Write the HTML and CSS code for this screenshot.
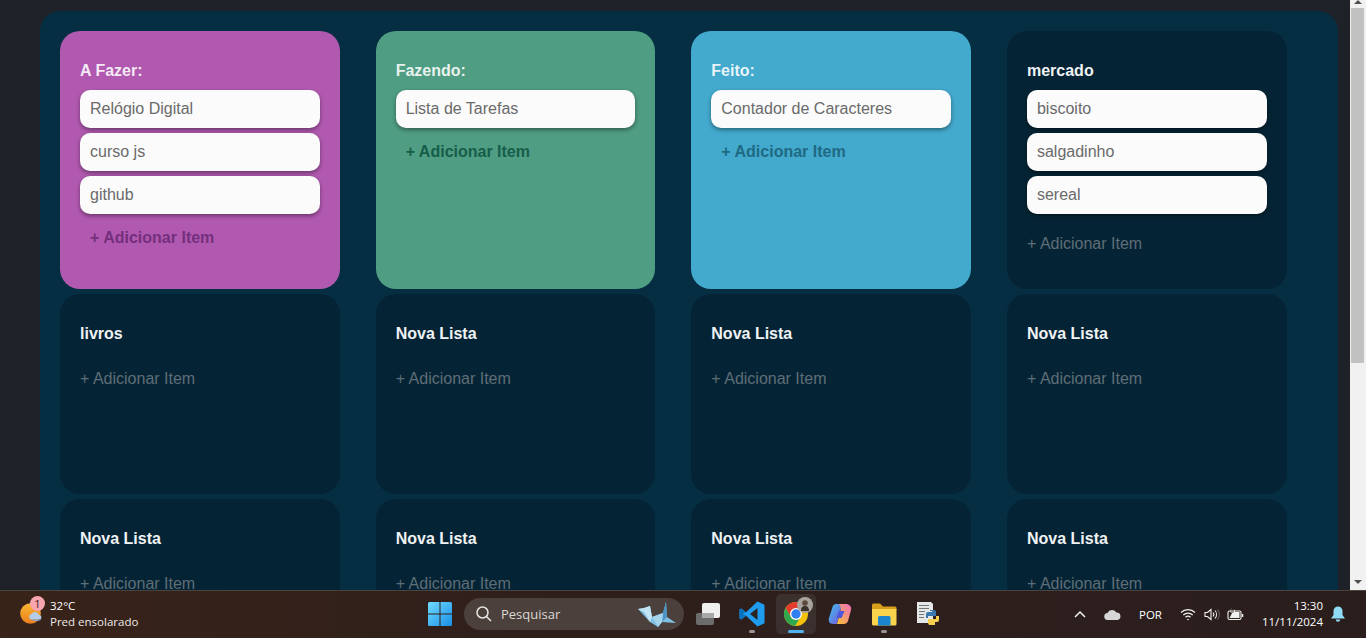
FILE: index.html
```html
<!DOCTYPE html>
<html lang="pt-BR">
<head>
<meta charset="utf-8">
<title>Listas</title>
<link rel="stylesheet" href="styles.css">
</head>
<body>
<div class="screen">
  <div class="window">
    <main class="page">
      <div class="board">
        <section class="card card-purple">
          <h2 class="card-title">A Fazer:</h2>
          <div class="item">Relógio Digital</div>
          <div class="item">curso js</div>
          <div class="item">github</div>
          <div class="add add-strong">+ Adicionar Item</div>
        </section>
        <section class="card card-green">
          <h2 class="card-title">Fazendo:</h2>
          <div class="item">Lista de Tarefas</div>
          <div class="add add-strong">+ Adicionar Item</div>
        </section>
        <section class="card card-blue">
          <h2 class="card-title">Feito:</h2>
          <div class="item">Contador de Caracteres</div>
          <div class="add add-strong">+ Adicionar Item</div>
        </section>
        <section class="card">
          <h2 class="card-title">mercado</h2>
          <div class="item">biscoito</div>
          <div class="item">salgadinho</div>
          <div class="item">sereal</div>
          <div class="add">+ Adicionar Item</div>
        </section>
        <section class="card"><h2 class="card-title">livros</h2><div class="add">+ Adicionar Item</div></section>
        <section class="card"><h2 class="card-title">Nova Lista</h2><div class="add">+ Adicionar Item</div></section>
        <section class="card"><h2 class="card-title">Nova Lista</h2><div class="add">+ Adicionar Item</div></section>
        <section class="card"><h2 class="card-title">Nova Lista</h2><div class="add">+ Adicionar Item</div></section>
        <section class="card"><h2 class="card-title">Nova Lista</h2><div class="add">+ Adicionar Item</div></section>
        <section class="card"><h2 class="card-title">Nova Lista</h2><div class="add">+ Adicionar Item</div></section>
        <section class="card"><h2 class="card-title">Nova Lista</h2><div class="add">+ Adicionar Item</div></section>
        <section class="card"><h2 class="card-title">Nova Lista</h2><div class="add">+ Adicionar Item</div></section>
      </div>
    </main>
    <div class="scrollbar">
      <div class="arrow-up"></div>
      <div class="thumb"></div>
      <div class="arrow-down"></div>
    </div>
  </div>

  <footer class="taskbar">
    <div class="weather">
      <div class="weather-icon">
        <svg width="26" height="26" viewBox="0 0 26 26">
          <defs><linearGradient id="sun" x1="0" y1="0" x2="0" y2="1"><stop offset="0" stop-color="#f7b733"/><stop offset="1" stop-color="#ec7f1e"/></linearGradient></defs>
          <circle cx="11.500" cy="12.500" r="10.300" fill="url(#sun)"/>
          <path d="M12 18.500a2.800 2.800 0 0 1 .6-5.400 4 4 0 0 1 7.400 .8 2.400 2.400 0 0 1 1 4.600z" fill="#b5cdea"/>
          <path d="M11 18.500H23a7 3 0 0 1-12 0Z" fill="#7fa2d4"/>
        </svg>
        <span class="weather-badge">1</span>
      </div>
      <div class="weather-text">
        <div class="weather-temp">32°C</div>
        <div class="weather-desc">Pred ensolarado</div>
      </div>
    </div>

    <div class="apps">
      <svg class="start" width="24" height="24" viewBox="0 0 24 24">
        <defs><linearGradient id="win" x1="0" y1="0" x2="1" y2="1"><stop offset="0" stop-color="#6fdcff"/><stop offset="1" stop-color="#1a8fe6"/></linearGradient></defs>
        <path d="M1.500 0H11.500V11.500H0V1.500A1.500 1.500 0 0 1 1.500 0Z M12.500 0H22.500A1.500 1.500 0 0 1 24 1.500V11.500H12.500Z M0 12.500H11.500V24H1.500A1.500 1.500 0 0 1 0 22.500Z M12.500 12.500H24V22.500A1.500 1.500 0 0 1 22.500 24H12.500Z" fill="url(#win)"/>
      </svg>
      <div class="search">
        <svg width="18" height="18" viewBox="0 0 18 18" fill="none" stroke="#e8e6e4" stroke-width="1.500"><circle cx="7.500" cy="7.500" r="5.500"/><path d="M11.500 11.500L16 16"/></svg>
        <span class="search-text">Pesquisar</span>
        <svg class="crane" width="40" height="28" viewBox="0 0 40 28">
          <path d="M1 9L7 8L13 6L15 17L26 13L29 2L30 17L39 23L25 22L21 27L13 22Z" fill="#7fbfe3"/>
          <path d="M1 9L7 8L13 6L15 17L13 22L7 12Z" fill="#c2e4f4"/>
          <path d="M29 2L30 17L25 22L26 13Z" fill="#4c93c4"/>
          <path d="M15 17L26 13L25 22L21 27Z" fill="#a5d3ec"/>
        </svg>
      </div>
      <div class="app">
        <svg width="26" height="24" viewBox="0 0 26 24">
          <rect x="1" y="11" width="18" height="12" rx="2" fill="#6c6c6c"/>
          <rect x="7" y="1" width="18" height="15" rx="2" fill="#efefef"/>
          <path d="M7 11H19V16H7Z" fill="#a8a8a8"/>
        </svg>
      </div>
      <div class="app app-open">
        <svg width="26" height="26" viewBox="0 0 26 26">
          <path d="M18.500 0.500L25.500 3.800V22.200L18.500 25.500L7 14.800L2.300 18.500L0.500 17.500V8.500L2.300 7.500L7 11.200Z" fill="#1f9cf0"/>
          <path d="M18.500 7L11 13L18.500 19Z" fill="#2c2320"/>
          <path d="M2.300 7.500L0.500 8.500V17.500L2.300 18.500L7 14.800L3.500 13L7 11.200Z" fill="#0a72bd"/>
        </svg>
        <span class="dot"></span>
      </div>
      <div class="app app-active">
        <svg width="26" height="26" viewBox="0 0 26 26">
          <circle cx="13" cy="13" r="12" fill="#f4c20d"/>
          <path d="M13 1A12 12 0 0 0 2.600 7L7.800 16L13 8H23.400A12 12 0 0 0 13 1Z" fill="#e33b2e"/>
          <path d="M2.600 7A12 12 0 0 0 12 25L17.500 16H8Z" fill="#2fa84f"/>
          <circle cx="13" cy="13" r="6" fill="#fff"/>
          <circle cx="13" cy="13" r="4.700" fill="#2f7ff0"/>
        </svg>
        <svg class="avatar" width="16" height="16" viewBox="0 0 16 16">
          <circle cx="8" cy="8" r="8" fill="#a8a39d"/>
          <path d="M4 14C4 10 6 9 8 9S12 10 12 14Z" fill="#3a3128"/>
          <circle cx="8" cy="6" r="2.800" fill="#5b4a3c"/>
        </svg>
        <span class="bar"></span>
      </div>
      <div class="app">
        <svg width="26" height="26" viewBox="0 0 26 26">
          <defs>
            <linearGradient id="cp1" x1="0" y1="0" x2="1" y2="1"><stop offset="0" stop-color="#3cc4ea"/><stop offset="1" stop-color="#7a52e0"/></linearGradient>
            <linearGradient id="cp2" x1="1" y1="0" x2="0" y2="1"><stop offset="0" stop-color="#f06ac0"/><stop offset="1" stop-color="#f7c331"/></linearGradient>
          </defs>
          <path d="M9 3H15L10 23H6C2.500 23 1 20 2 17L5.500 6C6 4 7.500 3 9 3Z" fill="url(#cp1)"/>
          <path d="M12 3H19C22 3 25 5.500 24 9L21 20C20.500 22 18.500 23 17 23H10L13 12C13.500 9 15 7 12 3Z" fill="url(#cp2)"/>
          <path d="M12 10H17.500L14.500 17H9.500Z" fill="#4f55dc"/>
        </svg>
      </div>
      <div class="app app-folder">
        <svg width="26" height="24" viewBox="0 0 26 24">
          <path d="M1 3A1.500 1.500 0 0 1 2.500 1.500H9L12 4.500H24A1.500 1.500 0 0 1 25.500 6V8H1Z" fill="#d99e1c"/>
          <path d="M1 7H25.500V22A1.500 1.500 0 0 1 24 23.500H2.500A1.500 1.500 0 0 1 1 22Z" fill="#f9d34c"/>
          <path d="M7 15.500A1.500 1.500 0 0 1 8.500 14H18A1.500 1.500 0 0 1 19.500 15.500V23.500H7Z" fill="#1b86cf"/>
        </svg>
        <span class="dot"></span>
      </div>
      <div class="app">
        <svg width="26" height="26" viewBox="0 0 26 26">
          <path d="M2 1H16L18 3V22H2Z" fill="#e4e6e8"/>
          <path d="M4 4.500H14M4 7.500H14M4 10.500H10M4 13.500H9M4 16.500H9" stroke="#777" stroke-width="1"/>
          <path d="M15 9H19A2 2 0 0 1 21 11V15H13V17H11V13A2 2 0 0 1 13 11H17V10H15Z" fill="#3a78b0"/>
          <path d="M21 15H24V19A2 2 0 0 1 22 21H20V24H15A2 2 0 0 1 13 22V18H21Z" fill="#f6d04d"/>
        </svg>
      </div>
    </div>

    <div class="tray">
      <svg class="tray-chevron" width="12" height="8" viewBox="0 0 12 8" fill="none" stroke="#f1f1f1" stroke-width="1.500"><path d="M1 7L6 2L11 7"/></svg>
      <svg class="tray-cloud" width="17" height="11" viewBox="0 0 17 11"><path d="M4 11A3.500 3.500 0 0 1 3.500 4 5 5 0 0 1 12.500 3.500 3.800 3.800 0 0 1 13.500 11Z" fill="#d6d6d6"/></svg>
      <span class="tray-lang">POR</span>
      <svg class="tray-wifi" width="16" height="13" viewBox="0 0 16 13" fill="none" stroke="#f1f1f1" stroke-width="1.200"><path d="M1 4.500A10 10 0 0 1 15 4.500M3.300 7A7 7 0 0 1 12.700 7M5.500 9.300A3.600 3.600 0 0 1 10.500 9.300"/><circle cx="8" cy="11.500" r="0.800" fill="#f1f1f1" stroke="none"/></svg>
      <svg class="tray-sound" width="16" height="13" viewBox="0 0 16 13" fill="none" stroke="#f1f1f1" stroke-width="1.100"><path d="M1 4.500H3.500L7 1.500V11.500L3.500 8.500H1Z"/><path d="M9 4.500A3 3 0 0 1 9 8.500M11 2.500A6 6 0 0 1 11 10.500"/><path d="M13.500 1.500A8 8 0 0 1 13.500 11.500" stroke="#666"/></svg>
      <svg class="tray-battery" width="17" height="14" viewBox="0 0 17 14" fill="none"><rect x="1" y="4" width="13" height="8.500" rx="1.500" stroke="#f1f1f1" stroke-width="1.100"/><path d="M15.500 7V10" stroke="#f1f1f1" stroke-width="1.500"/><path d="M2.500 11L5.500 5H3L4.500 0.500L3.500 5.500H6.500L8 2V5H12.500V11Z" fill="#f1f1f1"/></svg>
      <div class="clock">
        <div>13:30</div>
        <div>11/11/2024</div>
      </div>
      <svg class="tray-bell" width="14" height="16" viewBox="0 0 14 16"><path d="M7 0.500A4.500 4.500 0 0 1 11.500 5V9L14 12.500H0L2.500 9V5A4.500 4.500 0 0 1 7 0.500Z" fill="#8fdcf7"/><path d="M4.800 13.500H9.200A2.200 2.200 0 0 1 4.800 13.500Z" fill="#8fdcf7"/></svg>
    </div>
  </footer>
</div>
</body>
</html>
```

FILE: styles.css
```css
* {
  box-sizing: border-box;
}

html,
body {
  margin: 0;
  height: 100%;
  overflow: hidden;
}

body {
  font-family: "Liberation Sans", Arial, sans-serif;
  background: #1e2228;
}

.screen {
  display: flex;
  flex-direction: column;
  height: 638px;
}

.window {
  display: flex;
  height: 590px;
  overflow: hidden;
}

.page {
  width: 1350px;
  height: 590px;
  padding: 11px 12px 0 40px;
  overflow: hidden;
  background: #1e2228;
}

.board {
  display: grid;
  grid-template-columns: repeat(4, 279.670px);
  grid-template-rows: 258px 200px 200px;
  column-gap: 36px;
  row-gap: 5px;
  padding: 20px 0 20px 20px;
  border-radius: 20px;
  background: #062e42;
}

.card {
  padding: 20px;
  border-radius: 20px;
  background: #042435;
  color: #fff;
}

.card-purple {
  background: #b159b0;
}

.card-green {
  background: #4f9d82;
}

.card-blue {
  background: #43a9cd;
}

.card-title {
  margin: 10px 0 10px;
  font-size: 16px;
  line-height: 19px;
  font-weight: 700;
  color: #f0f2f4;
}

.card-purple .card-title,
.card-green .card-title,
.card-blue .card-title {
  color: rgba(255, 255, 255, 0.88);
}

.item {
  height: 38px;
  margin-bottom: 5px;
  padding: 0 10px;
  border-radius: 10px;
  background: #fbfbfb;
  box-shadow: 0 2px 4px rgba(0, 0, 0, 0.4);
  color: #6a6a6a;
  font-size: 16px;
  line-height: 37px;
}

.add {
  margin-top: 20px;
  font-size: 16px;
  line-height: 19px;
  color: #5f6d75;
}

.card-title + .add {
  margin-top: 26px;
}

.add-strong {
  margin-top: 0;
  padding: 9px 10px 10px;
  font-weight: 700;
}

.card-purple .add-strong {
  color: #742f7c;
}

.card-green .add-strong {
  color: #175e4a;
}

.card-blue .add-strong {
  color: #1f6a83;
}

.scrollbar {
  position: relative;
  width: 16px;
  background: #f1f1f1;
}

.thumb {
  position: absolute;
  top: 8px;
  left: 1px;
  width: 13px;
  height: 355px;
  background: #c1c1c1;
}

.arrow-up,
.arrow-down {
  position: absolute;
  left: 4px;
  width: 0;
  height: 0;
  border-left: 4px solid transparent;
  border-right: 4px solid transparent;
}

.arrow-up {
  top: 0;
  border-bottom: 4px solid #505050;
}

.arrow-down {
  bottom: 6px;
  border-top: 4px solid #505050;
}

.taskbar {
  display: grid;
  grid-template-columns: 1fr auto 1fr;
  align-items: center;
  height: 48px;
  padding-bottom: 1px;
  border-top: 1px solid #4a4441;
  background: linear-gradient(90deg, #382319 0%, #2f1f1b 40%, #2a1e1d 100%);
  color: #fff;
  font-family: "Open Sans", "Noto Sans", sans-serif;
}

.weather {
  display: flex;
  align-items: center;
  gap: 5px;
  padding-left: 19px;
}

.weather-icon {
  position: relative;
  width: 26px;
  height: 26px;
}

.weather-badge {
  position: absolute;
  top: -5px;
  left: 11px;
  width: 15px;
  height: 15px;
  border-radius: 50%;
  background: #f8a5b0;
  color: #3a1c1c;
  font-size: 11px;
  line-height: 15px;
  text-align: center;
}

.weather-text {
  font-size: 11.500px;
  line-height: 16px;
}

.weather-desc {
  color: #ece8e6;
}

.apps {
  display: flex;
  align-items: center;
  padding-left: 10px;
}

.start {
  margin-right: 12px;
}

.search {
  display: flex;
  align-items: center;
  width: 220px;
  height: 32px;
  padding: 0 0 0 11px;
  border-radius: 16px;
  background: #4b403c;
}

.search-text {
  flex: 1;
  margin-left: 8px;
  color: #dcd8d5;
  font-size: 13px;
}

.crane {
  margin-right: 7px;
}

.app {
  position: relative;
  display: flex;
  align-items: center;
  justify-content: center;
  width: 40px;
  height: 40px;
  margin-left: 4px;
}

.app-active {
  border-radius: 5px;
  background: #3b302d;
}

.dot {
  position: absolute;
  bottom: 1px;
  left: 17px;
  width: 6px;
  height: 3px;
  border-radius: 2px;
  background: #9b9592;
}

.bar {
  position: absolute;
  bottom: 1px;
  left: 12px;
  width: 16px;
  height: 3px;
  border-radius: 2px;
  background: #4fb4ee;
}

.avatar {
  position: absolute;
  top: 3px;
  right: 3px;
}

.tray {
  display: flex;
  align-items: center;
  justify-content: flex-end;
  padding-right: 21px;
}

.tray-cloud {
  margin-left: 18px;
}

.tray-lang {
  margin-left: 18px;
  font-size: 11.500px;
}

.tray-wifi {
  margin-left: 18px;
}

.tray-sound {
  margin-left: 8px;
}

.tray-battery {
  margin-left: 7px;
}

.clock {
  margin-left: 18px;
  font-size: 11.500px;
  line-height: 16px;
  text-align: right;
}

.tray-bell {
  margin-left: 8px;
}
```
